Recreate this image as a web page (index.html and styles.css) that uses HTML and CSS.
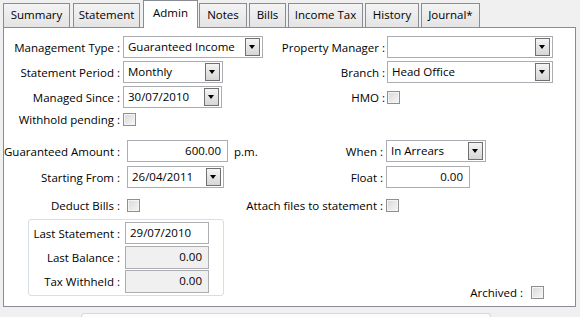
FILE: index.html
```html
<!DOCTYPE html>
<html>
<head>
    <title>Property - Admin</title>
    <meta name="viewport" content="width=device-width, initial-scale=1" />
    <link rel="stylesheet" href="styles.css">
</head>
<body>
    <div class="tabs">
        <div class="tab t-summary">Summary</div>
        <div class="tab t-statement">Statement</div>
        <div class="tab t-admin active">Admin</div>
        <div class="tab t-notes">Notes</div>
        <div class="tab t-bills">Bills</div>
        <div class="tab t-tax">Income Tax</div>
        <div class="tab t-history">History</div>
        <div class="tab t-journal">Journal*</div>
    </div>

    <div class="panel">
        <div class="topgrid">
            <label class="lbl">Management Type :</label>
            <div class="combo w140"><span>Guaranteed Income</span><i class="drop"></i></div>
            <label class="lbl">Property Manager :</label>
            <div class="combo w166"><span></span><i class="drop"></i></div>

            <label class="lbl">Statement Period :</label>
            <div class="combo w100"><span>Monthly</span><i class="drop"></i></div>
            <label class="lbl">Branch :</label>
            <div class="combo w166"><span>Head Office</span><i class="drop"></i></div>

            <label class="lbl">Managed Since :</label>
            <div class="combo w99"><span>30/07/2010</span><i class="drop"></i></div>
            <label class="lbl">HMO :</label>
            <div class="cell"><i class="chk"></i></div>

            <label class="lbl">Withhold pending :</label>
            <div class="cell"><i class="chk"></i></div>
            <div></div>
            <div></div>
        </div>

        <div class="botgrid">
            <label class="lbl">Guaranteed Amount :</label>
            <div class="cell"><div class="txt num w101">600.00</div><span class="unit">p.m.</span></div>
            <label class="lbl">When :</label>
            <div class="combo w100"><span>In Arrears</span><i class="drop"></i></div>

            <label class="lbl">Starting From :</label>
            <div class="combo w97"><span>26/04/2011</span><i class="drop"></i></div>
            <label class="lbl">Float :</label>
            <div class="txt num w84">0.00</div>

            <label class="lbl">Deduct Bills :</label>
            <div class="cell"><i class="chk"></i></div>
            <label class="lbl wide">Attach files to statement :</label>
            <div class="cell"><i class="chk"></i></div>
        </div>

        <div class="lower">
            <div class="group">
                <label class="lbl">Last Statement :</label>
                <div class="txt w84">29/07/2010</div>
                <label class="lbl">Last Balance :</label>
                <div class="txt num ro w84">0.00</div>
                <label class="lbl">Tax Withheld :</label>
                <div class="txt num ro w84">0.00</div>
            </div>
            <div class="archived">
                <span>Archived :</span>
                <i class="chk"></i>
            </div>
        </div>
    </div>

    <div class="below"></div>
</body>
</html>
```

FILE: styles.css
```css
html, body {
    overflow: hidden;
}

body {
    margin: 0;
    background: #f0f0f0;
    font-family: "Open Sans", "Noto Sans", sans-serif;
    font-size: 11.5px;
    color: #000;
    width: 580px;
    height: 317px;
}

/* tab strip */
.tabs {
    display: flex;
    align-items: flex-end;
    height: 27px;
    padding-left: 3px;
}

.tab {
    box-sizing: border-box;
    height: 24px;
    border: 1px solid #898c95;
    border-bottom: none;
    background: linear-gradient(#f3f3f3, #e4e4e4);
    text-align: center;
    line-height: 22px;
    margin-right: 2px;
}

.tab.active {
    height: 28px;
    margin-bottom: -1px;
    background: #fff;
    position: relative;
    z-index: 1;
    line-height: 24px;
}

.t-summary { width: 67px; margin-right: 3px; }
.t-statement { width: 67px; margin-right: 3px; }
.t-admin { width: 55px; margin-right: 1px; }
.t-notes { width: 48px; }
.t-bills { width: 37px; }
.t-tax { width: 75px; }
.t-history { width: 54px; }
.t-journal { width: 59px; }

/* main panel */
.panel {
    box-sizing: border-box;
    margin-left: 3px;
    width: 573px;
    height: 280px;
    border: 1px solid #898c95;
    background: #fff;
    padding-top: 8px;
    display: flex;
    flex-direction: column;
}

.lbl {
    text-align: right;
    white-space: nowrap;
    align-self: center;
}

.cell {
    display: flex;
    align-items: center;
}

.topgrid {
    display: grid;
    grid-template-columns: 119px 143px 121px 166px;
    grid-template-rows: 22px 22px 22px 16px;
    row-gap: 3px;
}

.topgrid .lbl:nth-child(4n+1) { padding-right: 3px; }
.topgrid .lbl:nth-child(4n+3) { padding-right: 2px; }

.botgrid {
    margin-top: 13px;
    display: grid;
    grid-template-columns: 123px 152px 107px 110px;
    grid-template-rows: 22px 22px 27px;
    row-gap: 4px;
}

.botgrid .lbl:nth-child(4n+1) { padding-right: 7px; }
.botgrid .lbl:nth-child(4n+3) { padding-right: 3px; }
.botgrid .wide { justify-self: end; }

/* combobox */
.combo {
    box-sizing: border-box;
    position: relative;
    height: 22px;
    border: 1px solid #abadb3;
    background: #fff;
    padding-left: 4px;
    line-height: 19px;
    white-space: nowrap;
}

.drop {
    position: absolute;
    right: 2px;
    top: 1px;
    box-sizing: border-box;
    width: 15px;
    height: 18px;
    border: 1px solid #707070;
    background: linear-gradient(#f4f4f4, #d6d6d6);
}

.drop::after {
    content: "";
    position: absolute;
    left: 3px;
    top: 6px;
    border-left: 3.5px solid transparent;
    border-right: 3.5px solid transparent;
    border-top: 4px solid #000;
}

/* text boxes */
.txt {
    box-sizing: border-box;
    height: 22px;
    border: 1px solid #abadb3;
    background: #fff;
    padding: 0 4px;
    line-height: 19px;
    white-space: nowrap;
}

.txt.num {
    text-align: right;
    padding-right: 6px;
}

.txt.ro {
    background: #f0f0f0;
    height: 23px;
    line-height: 20px;
}

.unit {
    margin-left: 6px;
}

.w84 { width: 84px; }
.w97 { width: 97px; }
.w99 { width: 99px; }
.w100 { width: 100px; }
.w101 { width: 101px; }
.w140 { width: 140px; }
.w166 { width: 166px; }

/* checkbox */
.chk {
    display: inline-block;
    box-sizing: border-box;
    width: 13px;
    height: 13px;
    border: 1px solid #8e8f8f;
    background: linear-gradient(135deg, #d8d8d8, #f7f7f7);
    box-shadow: inset 0 0 0 1px #f4f4f4;
}

/* lower area */
.lower {
    flex: 1;
    display: flex;
    align-items: flex-start;
}

.group {
    box-sizing: border-box;
    margin-left: 24px;
    width: 196px;
    height: 77px;
    border: 1px solid #d5dfe5;
    border-radius: 3px;
    padding-top: 2px;
    display: grid;
    grid-template-columns: 96px 84px;
    grid-template-rows: 23px 23px 23px;
    row-gap: 1px;
}

.group .lbl {
    padding-right: 5px;
}

.archived {
    margin-left: auto;
    margin-right: 31px;
    margin-bottom: 6px;
    align-self: flex-end;
    display: flex;
    align-items: center;
    gap: 8px;
}

.below {
    box-sizing: border-box;
    margin: 6px 0 0 81px;
    width: 410px;
    height: 4px;
    border: 1px solid #d9d9d9;
    border-bottom: none;
    border-radius: 3px 3px 0 0;
    background: #fcfcfc;
}
```
